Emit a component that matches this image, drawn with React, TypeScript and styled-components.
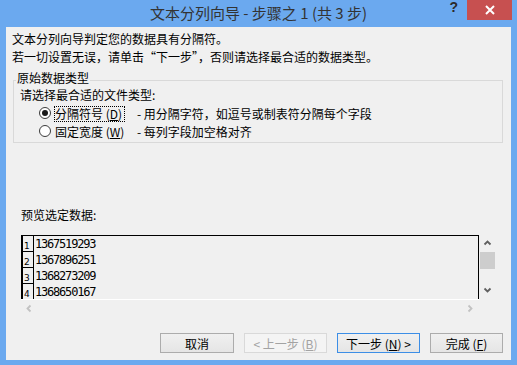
import React from 'react'
import styled, { createGlobalStyle } from 'styled-components'

const GlobalStyle = createGlobalStyle`
  html, body {
    margin: 0;
    padding: 0;
  }
  body {
    background: #6ba9ef;
    font-family: "Noto Sans CJK SC", "Noto Sans", sans-serif;
  }
`

const Window = styled.div`
  width: 517px;
  height: 365px;
  background: #6ba9ef;
  display: flex;
  flex-direction: column;
  overflow: hidden;
`

const TitleBar = styled.div`
  height: 27px;
  flex: none;
  display: grid;
  grid-template-columns: 1fr auto 1fr;
`

const Title = styled.div`
  grid-column: 2;
  font-size: 15px;
  line-height: 26px;
  color: #333;
  white-space: nowrap;
`

const Caption = styled.div`
  display: flex;
  justify-content: flex-end;
  align-items: flex-start;
  gap: 9px;
  padding-right: 5px;
`

const HelpGlyph = styled.span`
  font-family: "Liberation Sans", sans-serif;
  font-weight: bold;
  font-size: 14px;
  line-height: 14px;
  color: #2b2b2b;
`

const CloseButton = styled.div`
  width: 45px;
  height: 20px;
  background: #c75050;
  display: flex;
  align-items: center;
  justify-content: center;
`

const Client = styled.div`
  flex: 1;
  margin: 0 6px 5px;
  background: #f0f0f0;
  display: flex;
  flex-direction: column;
  padding-top: 3px;
  font-size: 12px;
  color: #000;
`

const Intro = styled.div`
  padding-left: 6px;
  line-height: 18px;
  white-space: nowrap;
`

const GroupBox = styled.div`
  margin: 14px 8px 0 7px;
  border: 1px solid #d9d9d9;
  padding-bottom: 2px;
`

const GroupTitle = styled.div`
  display: table;
  margin: -11px 0 0 2px;
  padding: 0 1px;
  background: #f0f0f0;
  line-height: 16px;
`

const Prompt = styled.div`
  padding-left: 6px;
  line-height: 18px;
`

const RadioRow = styled.div`
  display: flex;
  align-items: center;
  height: 18px;
  padding-left: 25px;
  white-space: nowrap;
`

const RadioCircle = styled.span<{ $checked?: boolean }>`
  width: 12px;
  height: 12px;
  box-sizing: border-box;
  border-radius: 50%;
  border: 1px solid #3c3c3c;
  background: #fff;
  margin-right: 3px;
  display: flex;
  align-items: center;
  justify-content: center;
  &::after {
    content: '';
    width: 6px;
    height: 6px;
    border-radius: 50%;
    background: ${(p) => (p.$checked ? '#1a1a1a' : 'transparent')};
  }
`

const RadioLabel = styled.span`
  width: 83px;
  flex: none;
`

const FocusText = styled.span<{ $focused?: boolean }>`
  display: inline-block;
  line-height: 14px;
  padding: 0 2px 0 0;
  border: 1px dotted ${(p) => (p.$focused ? '#000' : 'transparent')};
`

const Desc = styled.span``

const PreviewLabel = styled.div`
  margin: 63px 0 0 15px;
  line-height: 18px;
`

const PreviewArea = styled.div`
  margin: 11px 0 0 15px;
  display: grid;
  grid-template-columns: 458px 17px;
  grid-template-rows: 64px 17px;
`

const DataBox = styled.div`
  box-sizing: border-box;
  border: 1px solid #000;
  border-bottom: none;
  overflow: hidden;
`

const DataRow = styled.div`
  display: flex;
  height: 16px;
`

const RowNum = styled.div`
  box-sizing: border-box;
  width: 12px;
  height: 16px;
  flex: none;
  border-left: 1px solid #000;
  border-right: 1px solid #000;
  border-bottom: 1px solid #000;
  font-family: "DejaVu Sans", sans-serif;
  font-size: 9px;
  line-height: 9px;
  display: flex;
  align-items: flex-end;
  padding-left: 1px;
`

const RowText = styled.div`
  font-family: "DejaVu Sans Mono", monospace;
  font-size: 12px;
  letter-spacing: -1.2px;
  line-height: 16px;
  padding-left: 1px;
`

const VScroll = styled.div`
  display: flex;
  flex-direction: column;
`

const ArrowCell = styled.div`
  width: 17px;
  height: 17px;
  flex: none;
  display: flex;
  align-items: center;
  justify-content: center;
`

const Thumb = styled.div`
  height: 17px;
  margin: 0 1px;
  background: #cdcdcd;
`

const Track = styled.div`
  flex: 1;
`

const HScroll = styled.div`
  border-top: 1px solid #fff;
  display: flex;
  justify-content: space-between;
`

const ButtonRow = styled.div`
  margin-top: 17px;
  display: flex;
  justify-content: flex-end;
  gap: 10px;
  padding-right: 8px;
`

const Button = styled.div<{ $w: number; $default?: boolean; $disabled?: boolean }>`
  box-sizing: border-box;
  width: ${(p) => p.$w}px;
  height: 20px;
  border: 1px solid
    ${(p) => (p.$default ? '#3c8ee6' : p.$disabled ? '#d9d9d9' : '#acacac')};
  background: ${(p) =>
    p.$disabled ? '#f4f4f4' : 'linear-gradient(#f0f0f0, #e5e5e5)'};
  color: ${(p) => (p.$disabled ? '#a3a3a3' : '#000')};
  display: flex;
  align-items: center;
  justify-content: center;
  font-size: 12px;
  white-space: pre;
`

const Chevron = ({ dir, color }: { dir: 'up' | 'down' | 'left' | 'right'; color: string }) => {
  const pts = {
    up: '1.5,5.5 4.5,2.5 7.5,5.5',
    down: '1.5,2.5 4.5,5.5 7.5,2.5',
    left: '5.5,1.5 2.5,4.5 5.5,7.5',
    right: '2.5,1.5 5.5,4.5 2.5,7.5',
  }[dir]
  return (
    <svg width="9" height="9" viewBox="0 0 9 9">
      <polyline points={pts} fill="none" stroke={color} strokeWidth="1.8" />
    </svg>
  )
}

const rows = ['1367519293', '1367896251', '1368273209', '1368650167']

export default function App() {
  return (
    <Window>
      <GlobalStyle />
      <TitleBar>
        <Title>文本分列向导 - 步骤之 1 (共 3 步)</Title>
        <Caption>
          <HelpGlyph>?</HelpGlyph>
          <CloseButton>
            <svg width="10" height="10" viewBox="0 0 10 10">
              <path d="M1 1 L9 9 M9 1 L1 9" stroke="#fff" strokeWidth="2" />
            </svg>
          </CloseButton>
        </Caption>
      </TitleBar>
      <Client>
        <Intro>文本分列向导判定您的数据具有分隔符。</Intro>
        <Intro>若一切设置无误，请单击“下一步”，否则请选择最合适的数据类型。</Intro>
        <GroupBox>
          <GroupTitle>原始数据类型</GroupTitle>
          <Prompt>请选择最合适的文件类型:</Prompt>
          <RadioRow>
            <RadioCircle $checked />
            <RadioLabel>
              <FocusText $focused>
                分隔符号 (<u>D</u>)
              </FocusText>
            </RadioLabel>
            <Desc>- 用分隔字符，如逗号或制表符分隔每个字段</Desc>
          </RadioRow>
          <RadioRow>
            <RadioCircle />
            <RadioLabel>
              <FocusText>
                固定宽度 (<u>W</u>)
              </FocusText>
            </RadioLabel>
            <Desc>- 每列字段加空格对齐</Desc>
          </RadioRow>
        </GroupBox>
        <PreviewLabel>预览选定数据:</PreviewLabel>
        <PreviewArea>
          <DataBox>
            {rows.map((r, i) => (
              <DataRow key={r}>
                <RowNum>{i + 1}</RowNum>
                <RowText>{r}</RowText>
              </DataRow>
            ))}
          </DataBox>
          <VScroll>
            <ArrowCell>
              <Chevron dir="up" color="#606060" />
            </ArrowCell>
            <Thumb />
            <Track />
            <ArrowCell>
              <Chevron dir="down" color="#606060" />
            </ArrowCell>
          </VScroll>
          <HScroll>
            <ArrowCell>
              <Chevron dir="left" color="#c2c2c2" />
            </ArrowCell>
            <ArrowCell>
              <Chevron dir="right" color="#c2c2c2" />
            </ArrowCell>
          </HScroll>
        </PreviewArea>
        <ButtonRow>
          <Button $w={74}>取消</Button>
          <Button $w={83} $disabled>
            {'< 上一步 ('}<u>B</u>{')'}
          </Button>
          <Button $w={83} $default>
            {'下一步 ('}<u>N</u>{') >'}
          </Button>
          <Button $w={73}>
            {'完成 ('}<u>F</u>{')'}
          </Button>
        </ButtonRow>
      </Client>
    </Window>
  )
}
